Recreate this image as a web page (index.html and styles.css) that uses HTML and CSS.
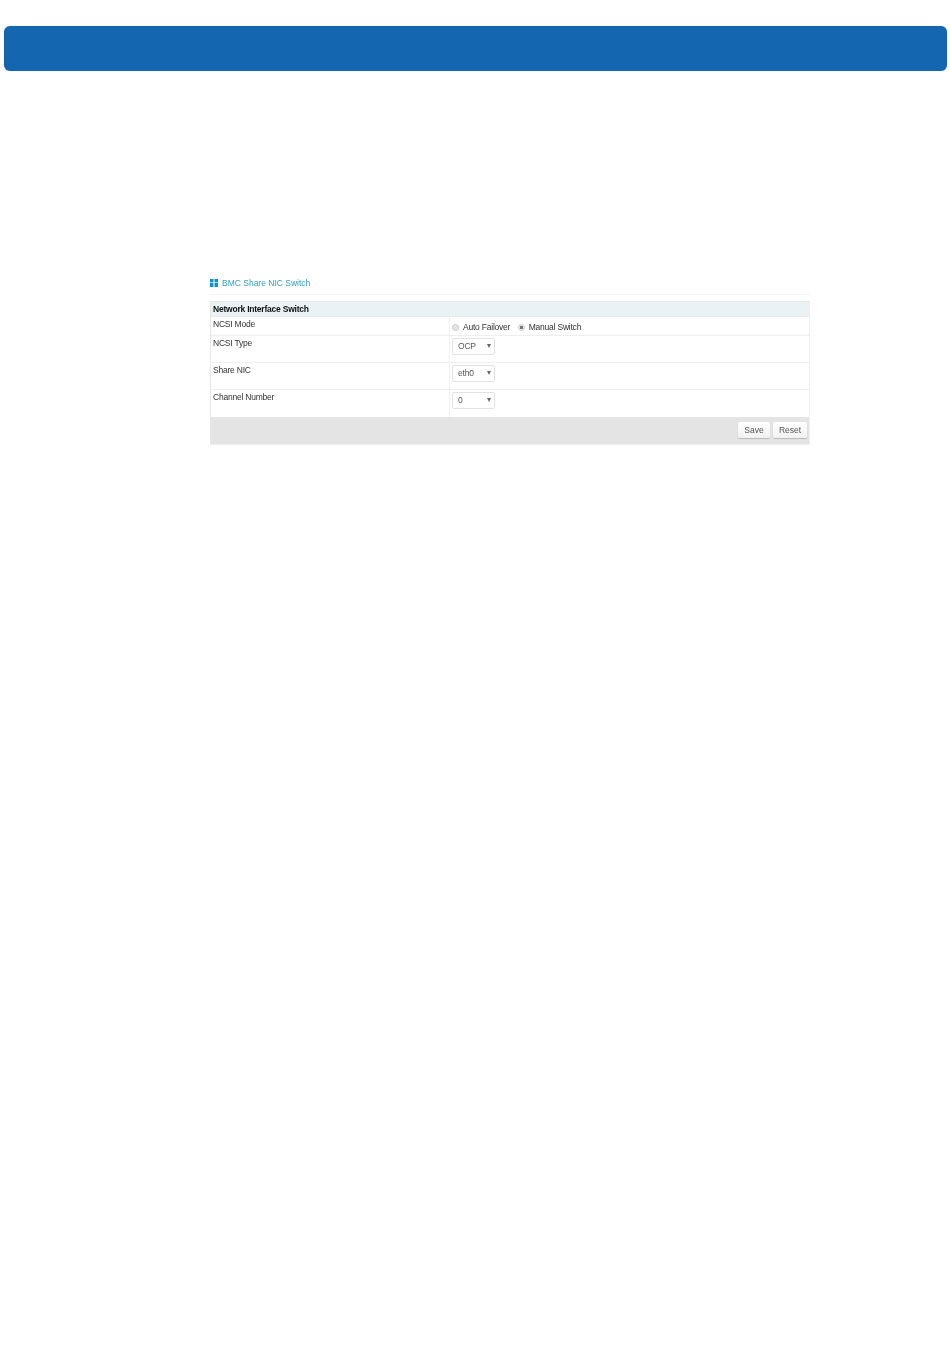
FILE: index.html
```html
<!DOCTYPE html>
<html lang="en">
<head>
<meta charset="utf-8">
<title>BMC Share NIC Switch</title>
<link rel="stylesheet" href="styles.css">
</head>
<body>
<header class="banner"></header>
<main class="panel">
  <h1 class="heading">
    <svg class="heading-icon" width="8" height="8" viewBox="0 0 8 8"><rect x="0" y="0" width="3.5" height="3" fill="#0f93c6"/><rect x="0" y="3.6" width="3.5" height="4.4" fill="#0f93c6"/><rect x="4.5" y="0" width="3.5" height="3" fill="#0f93c6"/><rect x="4.5" y="3.6" width="3.5" height="4.4" fill="#0f93c6"/></svg>
    <span>BMC Share NIC Switch</span>
  </h1>
  <section class="form">
    <div class="form-title">Network Interface Switch</div>
    <div class="row row-mode">
      <div class="label">NCSI Mode</div>
      <div class="value value-mode">
        <span class="radio"></span><span class="radio-text">Auto Failover</span>
        <span class="radio radio-on"></span><span class="radio-text">Manual Switch</span>
      </div>
    </div>
    <div class="row">
      <div class="label">NCSI Type</div>
      <div class="value"><div class="select"><span>OCP</span><span class="caret"></span></div></div>
    </div>
    <div class="row">
      <div class="label">Share NIC</div>
      <div class="value"><div class="select"><span>eth0</span><span class="caret"></span></div></div>
    </div>
    <div class="row row-last">
      <div class="label">Channel Number</div>
      <div class="value"><div class="select"><span>0</span><span class="caret"></span></div></div>
    </div>
    <div class="actions">
      <button class="btn btn-save">Save</button>
      <button class="btn btn-reset">Reset</button>
    </div>
  </section>
</main>
</body>
</html>
```
FILE: styles.css
```css
html, body {
  margin: 0;
  padding: 0;
  background: #fff;
}
body {
  height: 1369px;
  overflow: hidden;
  padding-top: 26px;
  box-sizing: border-box;
  font-family: "Liberation Sans", Arial, sans-serif;
  font-size: 8.5px;
  color: #444;
}
.banner {
  height: 45px;
  margin: 0 3px 0 4px;
  background: #1566b0;
  border-radius: 6px;
  box-shadow: 0 0 1px #a9c8e4;
}
.panel {
  width: 600px;
  margin: 206px 0 0 210px;
  filter: blur(0.3px);
}
.heading {
  display: flex;
  align-items: center;
  gap: 4px;
  height: 12px;
  margin: 0;
  padding-bottom: 5px;
  border-bottom: 1px solid #f3f3f3;
  font-size: 8.5px;
  font-weight: 400;
  color: #2f9fc4;
}
.form {
  margin-top: 6px;
  border: 1px solid #efefef;
  border-top: 1px solid #e4e8ea;
  border-left-color: #e6e6e6;
  letter-spacing: -0.22px;
}
.form-title {
  height: 14px;
  line-height: 14px;
  padding-left: 2px;
  background: #eaf2f6;
  border-bottom: 1px solid #e6eaec;
  font-weight: 700;
  color: #111;
}
.row {
  display: flex;
  height: 26px;
  border-bottom: 1px solid #eeeeee;
}
.row-mode {
  height: 18px;
}
.row-last {
  height: 27px;
  border-bottom: 0;
}
.label {
  width: 236px;
  padding: 2px 0 0 2px;
  line-height: 10px;
  color: #333;
  border-right: 1px solid #efefef;
}
.value {
  flex: 1;
  padding: 2px 0 0 2px;
}
.value-mode {
  display: flex;
  align-items: center;
}
.radio {
  width: 7px;
  height: 7px;
  box-sizing: border-box;
  border: 1px solid #c9c9c9;
  border-radius: 50%;
  background: #e4e4e4;
}
.radio-on {
  margin-left: 7.5px;
  background: radial-gradient(circle, #777 0 1.6px, #eee 2px);
}
.radio-text {
  margin-left: 4px;
  color: #333;
}
.select {
  display: flex;
  align-items: center;
  justify-content: space-between;
  width: 43px;
  height: 17px;
  box-sizing: border-box;
  padding: 0 3px 1px 5px;
  border: 1px solid #e2e2e2;
  border-radius: 2px;
  background: #fff;
  color: #555;
}
.caret {
  width: 0;
  height: 0;
  border-left: 2px solid transparent;
  border-right: 2px solid transparent;
  border-top: 4px solid #666;
}
.actions {
  display: flex;
  justify-content: flex-end;
  align-items: flex-start;
  gap: 3px;
  height: 22px;
  padding: 5px 2px 0 0;
  background: #e4e4e4;
}
.btn {
  height: 16px;
  padding: 0;
  border: 0;
  border-radius: 2px;
  background: linear-gradient(#fff, #f1f1f1);
  box-shadow: 0 1px 1px #b9b9b9;
  font-family: inherit;
  font-size: 8.5px;
  color: #555;
}
.btn-save { width: 32px; }
.btn-reset { width: 34px; }
```
